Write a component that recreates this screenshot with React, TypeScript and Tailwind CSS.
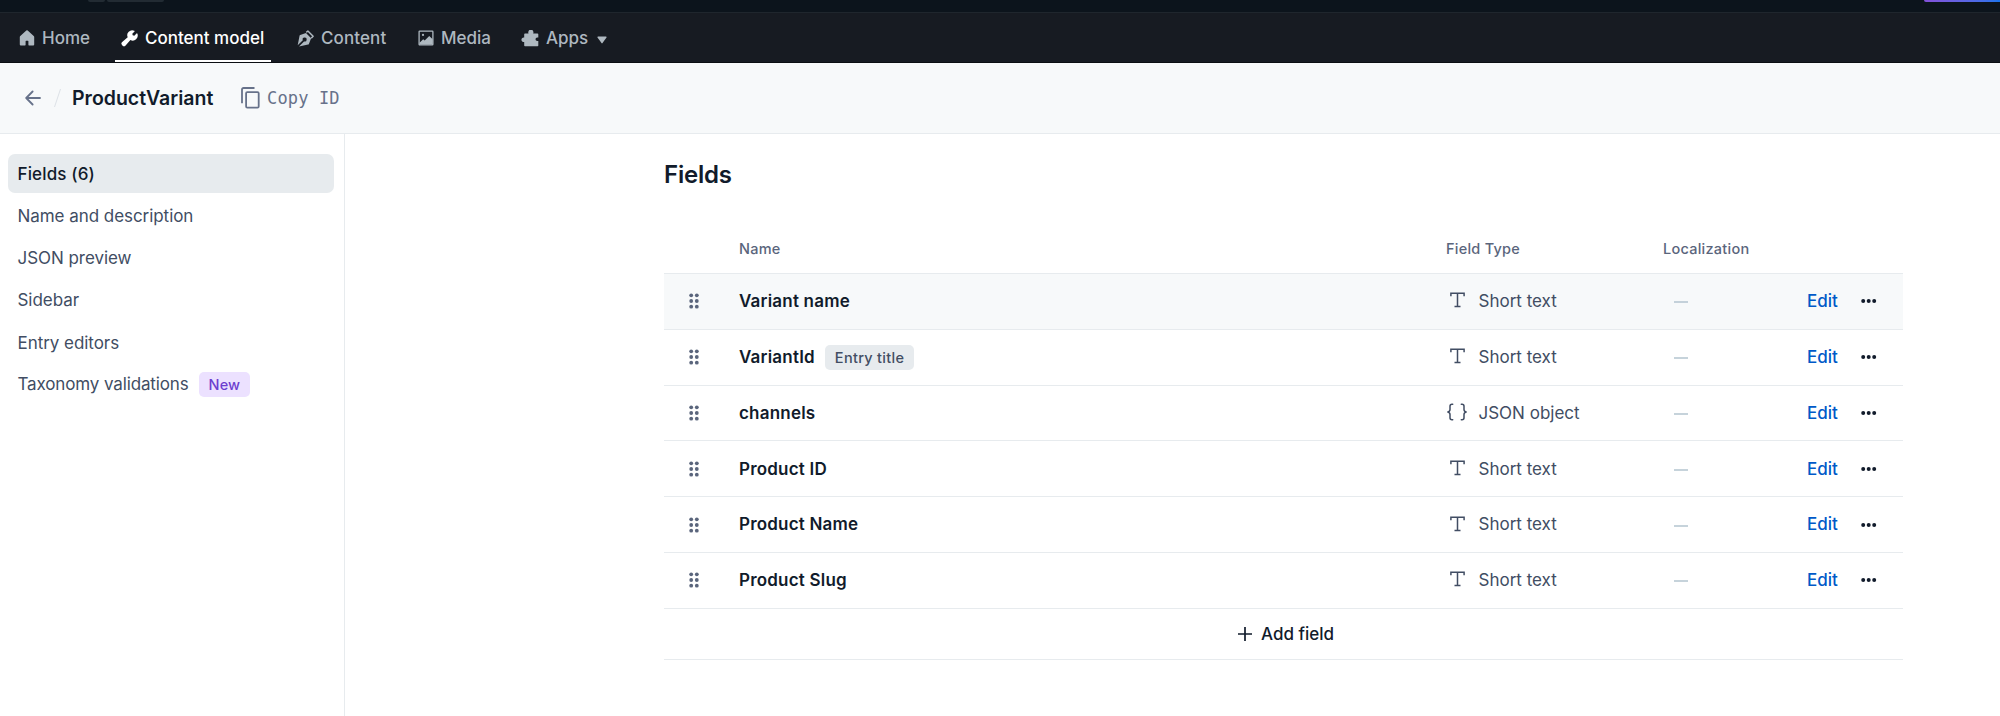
import type { ReactNode } from 'react';

function HomeIcon() {
  return (
    <svg className="h-4 w-4" viewBox="0 0 16 16" fill="currentColor">
      <path d="M7.3.6a1 1 0 0 1 1.400 0l6 5.400a1.200 1.200 0 0 1 .5 1v7.400a1 1 0 0 1-1 1H10a.6.600 0 0 1-.6-.6v-3.600a.5.500 0 0 0-.5-.5H7.100a.5.500 0 0 0-.5.500v3.600a.6.600 0 0 1-.6.600H1.800a1 1 0 0 1-1-1V7a1.200 1.200 0 0 1 .5-1z" />
    </svg>
  );
}

function WrenchIcon() {
  return (
    <svg className="h-[17px] w-[17px]" viewBox="0 0 17 17" fill="currentColor">
      <path d="M16.300 3.600a.5.500 0 0 0-.8-.1l-2.200 2.200-1.600-.4-.4-1.600 2.200-2.200a.5.500 0 0 0-.2-.8A5 5 0 0 0 6.700 7.300L1.200 12a2.200 2.200 0 0 0 0 3.200l.2.200a2.200 2.200 0 0 0 3.200 0l4.800-5.400a5 5 0 0 0 6.900-6.400z" />
    </svg>
  );
}

function PenIcon() {
  return (
    <svg className="h-[17px] w-[17px]" viewBox="0 0 17 17" fill="none">
      <path
        d="M9 2.900L3.200 4.900a1 1 0 0 0-.6.700L.7 15.300l5.100-5.100a2 2 0 1 1 1.200 1.200L2 16.400l9.100-1.900a1 1 0 0 0 .8-.6l2.200-5.700z"
        fill="currentColor"
      />
      <path d="M9.300 2.300L10.900 1 16.100 6.200l-1.900 2" stroke="currentColor" strokeWidth="1.500" strokeLinejoin="round" />
    </svg>
  );
}

function MediaIcon() {
  return (
    <svg className="h-4 w-4" viewBox="0 0 16 16" fill="none">
      <rect x="1.100" y="1.100" width="13.800" height="13.800" rx=".6" stroke="currentColor" strokeWidth="1.300" />
      <circle cx="5" cy="4.900" r="1.100" fill="currentColor" />
      <path d="M1.500 14.500v-1.800l3.700-3.500 1.500 1.400 4.500-4.600 3.500 3.300v5.200z" fill="currentColor" />
    </svg>
  );
}

function PuzzleIcon() {
  return (
    <svg className="h-[17px] w-[18px]" viewBox="0 0 18 17" fill="currentColor">
      <path d="M4 3.400h3.500a2.600 2.600 0 1 1 4.700 0h4.300a.8.800 0 0 1 .8.800v3.300h-1a1.800 1.800 0 0 0 0 3.600h1v4.300a.8.800 0 0 1-.8.800H4a.8.800 0 0 1-.8-.8v-3.400a2.300 2.300 0 1 1 0-4.500V4.200A.8.800 0 0 1 4 3.400z" />
    </svg>
  );
}

function ArrowLeftIcon() {
  return (
    <svg className="h-4 w-4" viewBox="0 0 16 16" fill="none" stroke="currentColor" strokeWidth="1.800" strokeLinecap="round" strokeLinejoin="round">
      <path d="M15 8H1.500M7.600 1.500L1.200 8l6.400 6.500" />
    </svg>
  );
}

function CopyIcon() {
  return (
    <svg className="h-[22px] w-[19px]" viewBox="0 0 19 22" fill="none" stroke="currentColor" strokeWidth="1.800">
      <path d="M1 16.200V2.500A1.500 1.500 0 0 1 2.500 1H13.500" />
      <rect x="5.100" y="5.100" width="12.600" height="15.500" rx="1.200" />
    </svg>
  );
}

function DragIcon() {
  return (
    <svg className="h-4 w-[10px]" viewBox="0 0 10 16" fill="currentColor">
      {[2.300, 8, 13.700].map((y) => (
        <g key={y}>
          <circle cx="2.200" cy={y} r="1.900" />
          <circle cx="7.800" cy={y} r="1.900" />
        </g>
      ))}
    </svg>
  );
}

function TextTypeIcon() {
  return (
    <svg className="ml-1 h-[16px] w-[15px]" viewBox="0 0 15 16" fill="none" stroke="currentColor" strokeWidth="1.500">
      <path d="M.9 4.300V1.200h13.200v3.100M7.500 1.200v13.400M4.500 14.600h6" />
    </svg>
  );
}

function JsonIcon() {
  return (
    <svg className="h-[18px] w-[22px]" viewBox="0 0 22 18" fill="none" stroke="currentColor" strokeWidth="1.500" strokeLinecap="round">
      <path d="M6.700 1.200H6C4.600 1.200 4 2 4 3.200v3.200C4 7.900 3.200 8.800 1.400 9 3.200 9.200 4 10.100 4 11.600v3.200c0 1.200.6 2 2 2h.7" />
      <path d="M15.300 1.200h.7c1.400 0 2 .8 2 2v3.200c0 1.500.8 2.400 2.600 2.600-1.800.2-2.600 1.100-2.600 2.600v3.200c0 1.200-.6 2-2 2h-.7" />
    </svg>
  );
}

function NavItem({ icon, label, className }: { icon: ReactNode; label: string; className: string }) {
  return (
    <a className={`flex items-center border-b-2 pt-[3px] ${className}`}>
      {icon}
      <span className="ml-[7px] pt-[2px]">{label}</span>
    </a>
  );
}

const sections = ['Name and description', 'JSON preview', 'Sidebar', 'Entry editors'];

const fields = [
  { name: 'Variant name', type: 'Short text' },
  { name: 'VariantId', type: 'Short text', title: true },
  { name: 'channels', type: 'JSON object' },
  { name: 'Product ID', type: 'Short text' },
  { name: 'Product Name', type: 'Short text' },
  { name: 'Product Slug', type: 'Short text' },
];

const columns = 'grid grid-cols-[75px_707px_217px_144px_53px_43px] items-center border-b border-[#e7ebee]';

export default function App() {
  return (
    <div className="flex h-[716px] w-[2000px] flex-col overflow-hidden bg-white font-['Inter',sans-serif] text-[17px] text-[#414d63]">
      <div className="flex h-3 shrink-0 items-start bg-[#0c141c]">
        <div className="ml-[88px] h-[2px] w-[17px] rounded-b-full bg-[#222b33]" />
        <div className="ml-[2px] h-[2px] w-[57px] rounded-b-full bg-[#222b33]" />
        <div className="ml-auto h-[2px] w-[76px] rounded-bl-full bg-linear-to-r from-[#8250d8] to-[#1673ec]" />
      </div>

      <nav className="flex h-[51px] shrink-0 items-stretch border-t border-b border-t-[#1f262d] border-b-[#0b0e12] bg-[#171b22] pl-[19px] font-medium text-[#aeb8c0]">
        <NavItem icon={<HomeIcon />} label="Home" className="w-[96px] border-transparent" />
        <NavItem icon={<WrenchIcon />} label="Content model" className="w-[156px] border-white pl-[6px] text-white" />
        <NavItem icon={<PenIcon />} label="Content" className="ml-[26px] w-[121px] border-transparent tracking-[0.1px]" />
        <NavItem icon={<MediaIcon />} label="Media" className="w-[103px] border-transparent" />
        <NavItem icon={<PuzzleIcon />} label="Apps" className="w-[76px] border-transparent" />
        <svg className="mt-[23px] h-2 w-[10px]" viewBox="0 0 10 8" fill="currentColor">
          <path d="M1 .6h8a.6.600 0 0 1 .5 1L5.500 7a.6.600 0 0 1-1 0L.5 1.600A.6.600 0 0 1 1 .6z" />
        </svg>
      </nav>

      <header className="flex h-[71px] shrink-0 items-center border-b border-[#e7ebee] bg-[#f7f9fa] pl-[25px] text-[#67728a]">
        <ArrowLeftIcon />
        <svg className="ml-[12px] h-5 w-[9px]" viewBox="0 0 9 20" fill="none" stroke="#dde2e7">
          <path d="M7.500 1L1.500 19" />
        </svg>
        <h1 className="ml-[10px] w-[169px] pt-[2px] text-[19.500px] font-semibold text-[#111b2b]">ProductVariant</h1>
        <CopyIcon />
        <span className="ml-[7px] pt-[2px] font-['DejaVu_Sans_Mono',monospace] text-[17px] tracking-[0.150px]">Copy ID</span>
      </header>

      <div className="flex min-h-0 flex-1">
        <aside className="flex w-[345px] shrink-0 flex-col gap-[3.200px] border-r border-[#e7ebee] pt-5 pr-[10px] pl-2">
          <a className="flex h-[39px] items-center rounded-[7px] bg-[#e7ebee] pt-[2px] pl-[9.500px] font-medium tracking-[0.150px] text-[#111b2b]">Fields (6)</a>
          {sections.map((s) => (
            <a key={s} className="flex h-[39px] items-center pt-[2px] pl-[9.500px] tracking-[-0.050px]">
              {s}
            </a>
          ))}
          <a className="flex h-[39px] items-center pt-px pl-[9.500px] tracking-[-0.130px]">
            Taxonomy validations
            <span className="ml-[10px] flex h-[25px] items-center rounded-[5px] bg-[#ece1ff] px-[10px] text-[14.500px] font-medium tracking-[0.100px] text-[#6c3ecf]">New</span>
          </a>
        </aside>

        <main className="ml-[319px] w-[1239px] pt-[24px]">
          <h2 className="h-9 text-[24px] leading-[34px] font-semibold tracking-[-0.200px] text-[#111b2b]">Fields</h2>
          <div className={`${columns} mt-[30px] h-[50px] text-[14.500px] font-medium tracking-[0.250px] text-[#5a657c]`}>
            <span className="col-start-2">Name</span>
            <span>Field Type</span>
            <span>Localization</span>
          </div>
          {fields.map((f, i) => (
            <div key={f.name} className={`${columns} h-[55.800px] ${i === 0 ? 'bg-[#f7f9fa]' : ''}`}>
              <span className="pl-[25px] text-[#5a657c]">
                <DragIcon />
              </span>
              <span className="flex items-center pt-px font-semibold tracking-[0.200px] text-[#111b2b]">
                {f.name}
                {f.title && (
                  <span className="ml-[10px] flex h-[25px] items-center rounded-[5px] bg-[#e7ebee] px-[10px] text-[14.500px] font-medium tracking-[0.300px] text-[#414d63]">Entry title</span>
                )}
              </span>
              <span className="flex items-center pt-px">
                <span className="w-[32.500px] pb-[3px]">{f.type === 'JSON object' ? <JsonIcon /> : <TextTypeIcon />}</span>
                {f.type}
              </span>
              <svg className="mt-[2px] ml-[11px] h-[2px] w-[14px]" viewBox="0 0 14 2" fill="#aec1cc">
                <rect y=".3" width="14" height="1.400" />
              </svg>
              <a className="pt-px font-medium text-[#0059c8]">Edit</a>
              <svg className="ml-px h-1 w-4" viewBox="0 0 16 4" fill="#111b2b">
                <circle cx="2.200" cy="2" r="2" />
                <circle cx="7.700" cy="2" r="2" />
                <circle cx="13.200" cy="2" r="2" />
              </svg>
            </div>
          ))}
          <button className="flex h-[51px] w-full items-center justify-center border-b border-[#e7ebee] pt-px pl-[5px] font-medium text-[#111b2b]">
            <svg className="mr-[9px] h-[14px] w-[14px]" viewBox="0 0 14 14" stroke="currentColor" strokeWidth="1.700">
              <path d="M7 0v14M0 7h14" />
            </svg>
            Add field
          </button>
        </main>
      </div>
    </div>
  );
}
